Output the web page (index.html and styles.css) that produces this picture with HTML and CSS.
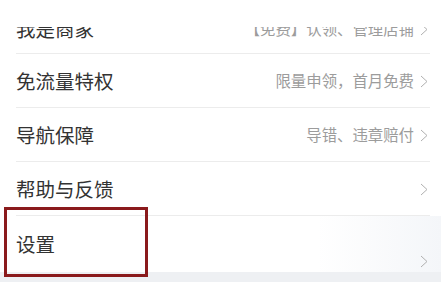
FILE: index.html
```html
<!DOCTYPE html>
<html lang="zh">
<head>
<meta charset="utf-8">
<link rel="stylesheet" href="styles.css">
</head>
<body>
<div class="page">
  <div class="top-cover"></div>
  <ul class="list">
    <li class="row row-first">
      <span class="title">我是商家</span>
      <span class="extra">【免费】认领、管理店铺</span>
      <svg class="chev" viewBox="0 0 8 13" width="8" height="13"><polyline points="1,1 7,6.5 1,12"/></svg>
    </li>
    <li class="row">
      <span class="title">免流量特权</span>
      <span class="extra">限量申领，首月免费</span>
      <svg class="chev" viewBox="0 0 8 13" width="8" height="13"><polyline points="1,1 7,6.5 1,12"/></svg>
    </li>
    <li class="row">
      <span class="title">导航保障</span>
      <span class="extra">导错、违章赔付</span>
      <svg class="chev" viewBox="0 0 8 13" width="8" height="13"><polyline points="1,1 7,6.5 1,12"/></svg>
    </li>
    <li class="row">
      <span class="title">帮助与反馈</span>
      <span class="extra"></span>
      <svg class="chev" viewBox="0 0 8 13" width="8" height="13"><polyline points="1,1 7,6.5 1,12"/></svg>
    </li>
    <li class="row row-last">
      <span class="title">设置</span>
      <span class="extra"></span>
      <svg class="chev chev-low" viewBox="0 0 8 13" width="8" height="13"><polyline points="1,1 7,6.5 1,12"/></svg>
    </li>
  </ul>
  <div class="highlight"></div>
</div>
</body>
</html>
```

FILE: styles.css
```css
* { box-sizing: border-box; }
html, body {
  margin: 0;
  padding: 0;
  background: #eef0f3;
}
.page {
  position: relative;
  width: 441px;
  height: 282px;
  overflow: hidden;
  background: #eef0f3;
  font-family: "Noto Sans CJK SC", "Noto Sans", sans-serif;
}
.list {
  list-style: none;
  margin: 0;
  padding: 0;
  background: #fff;
}
.row {
  display: flex;
  align-items: center;
  height: 54px;
  margin: 0;
  padding: 0 13px 0 16px;
  position: relative;
}
.row::after {
  content: "";
  position: absolute;
  left: 16px;
  right: 11px;
  bottom: 0;
  height: 1px;
  background: #ececec;
}
.row-first { height: 54px; padding-top: 4px; }
.row-last { height: 56px; background: linear-gradient(90deg, #ffffff 0%, #ffffff 72%, #f4f6f9 100%); }
.row-last::after { display: none; }
.title {
  font-size: 19.5px;
  color: #333333;
  line-height: 1;
}
.extra {
  margin-left: auto;
  font-size: 15.4px;
  color: #9c9c9c;
  line-height: 1;
  margin-right: 6px;
}
.chev {
  flex: none;
  fill: none;
  stroke: #b0b0b0;
  stroke-width: 1;
}
.chev-low {
  align-self: flex-end;
  margin-bottom: 4px;
}
.top-cover {
  position: absolute;
  left: 0;
  top: 0;
  width: 441px;
  height: 27px;
  background: #fff;
  z-index: 2;
}
.highlight {
  position: absolute;
  left: 4px;
  top: 207px;
  width: 144px;
  height: 70px;
  border: 3px solid #8a1a1c;
  z-index: 3;
}
```
